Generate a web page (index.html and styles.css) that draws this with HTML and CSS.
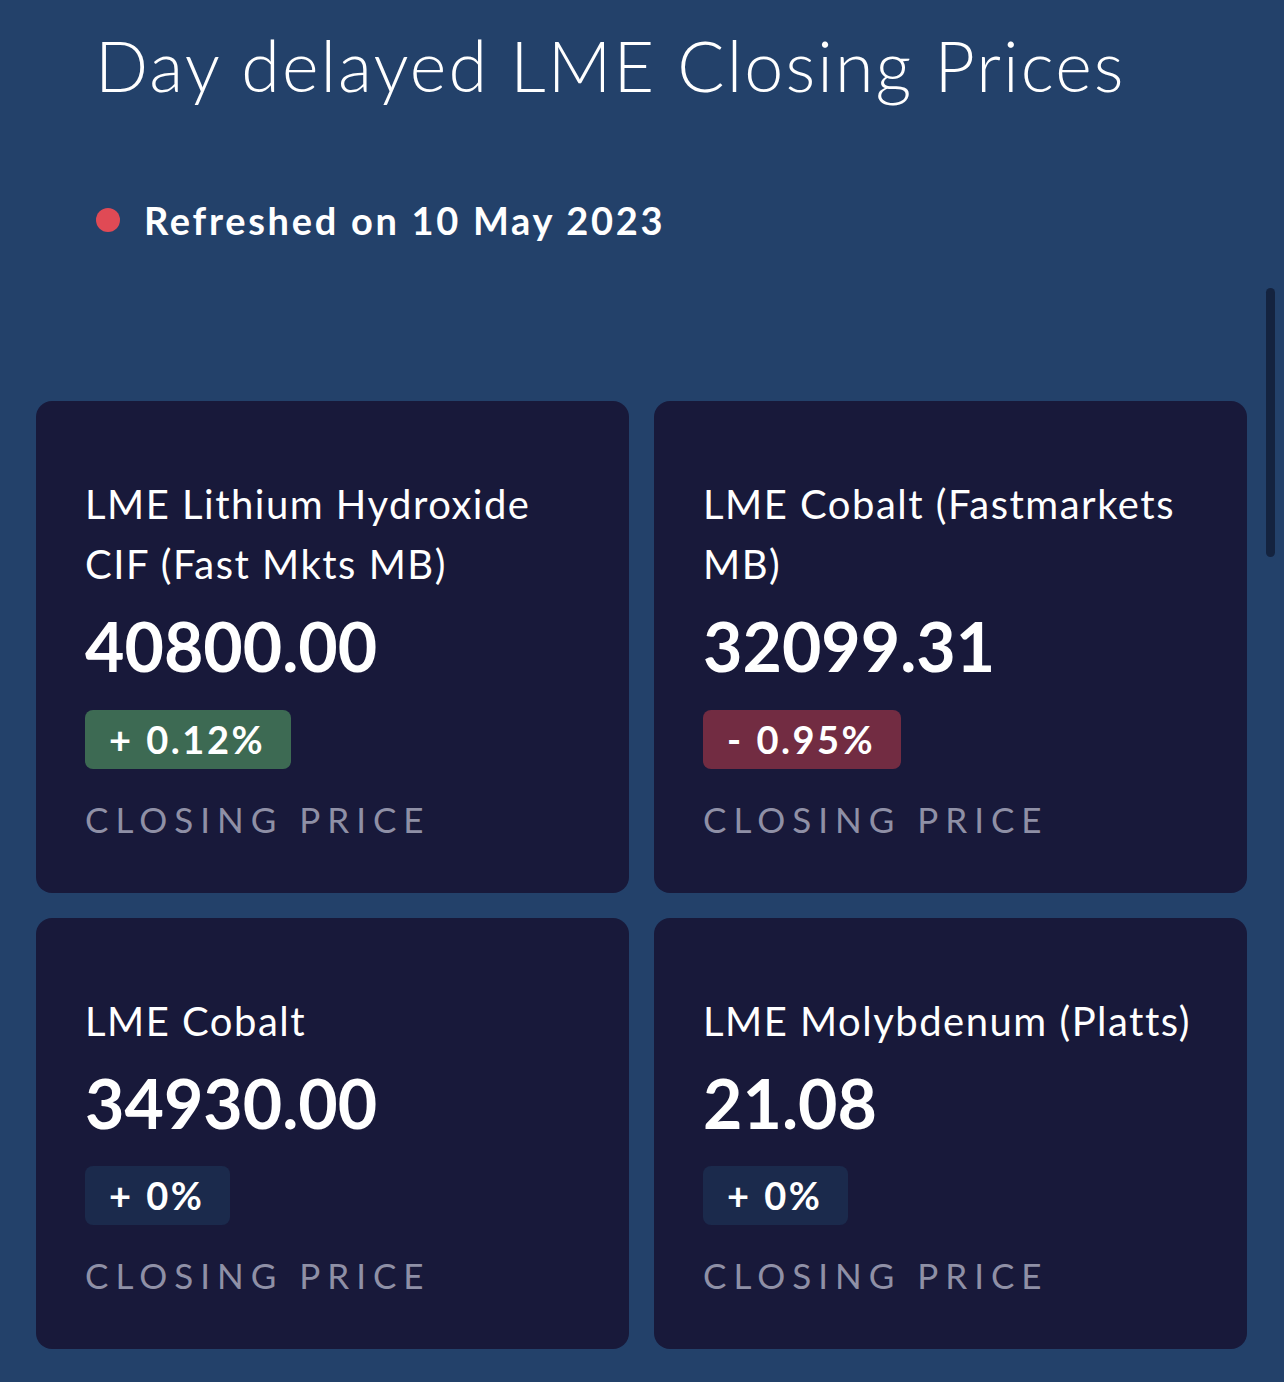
FILE: index.html
```html
<!DOCTYPE html>
<html lang="en">
<head>
    <meta charset="UTF-8">
    <meta name="viewport" content="width=device-width, initial-scale=1.0">
    <title>Day delayed LME Closing Prices</title>
    <link rel="stylesheet" href="styles.css">
</head>
<body>
    <div class="page">
        <header class="page-header">
            <h1>Day delayed LME Closing Prices</h1>
            <p class="status"><span class="status-dot"></span>Refreshed on 10 May 2023</p>
        </header>

        <div class="price-grid">
            <div class="price-card">
                <h2 class="metal-name">LME Lithium Hydroxide CIF (Fast Mkts MB)</h2>
                <p class="price">40800.00</p>
                <span class="change change-up">+ 0.12%</span>
                <p class="label">Closing Price</p>
            </div>
            <div class="price-card">
                <h2 class="metal-name">LME Cobalt (Fastmarkets MB)</h2>
                <p class="price">32099.31</p>
                <span class="change change-down">- 0.95%</span>
                <p class="label">Closing Price</p>
            </div>
            <div class="price-card">
                <h2 class="metal-name">LME Cobalt</h2>
                <p class="price">34930.00</p>
                <span class="change change-flat">+ 0%</span>
                <p class="label">Closing Price</p>
            </div>
            <div class="price-card">
                <h2 class="metal-name">LME Molybdenum (Platts)</h2>
                <p class="price">21.08</p>
                <span class="change change-flat">+ 0%</span>
                <p class="label">Closing Price</p>
            </div>
        </div>

        <!-- scroll indicator -->
        <div class="scroll-thumb"></div>
    </div>
</body>
</html>
```

FILE: styles.css
```css
/* Basic reset */
* {
    margin: 0;
    padding: 0;
    box-sizing: border-box;
}

body {
    font-family: Lato, "Noto Sans", sans-serif;
    background-color: #23416a;
    color: #fff;
}

.page {
    position: relative;
    min-height: 1382px;
}

/* Header */
.page-header {
    padding: 23px 0 0 96px;
}

.page-header h1 {
    font-size: 70px;
    font-weight: 300;
    line-height: 84px;
    letter-spacing: 2.1px;
    margin-left: -1px;
}

.status {
    display: flex;
    align-items: center;
    margin-top: 90px;
    font-size: 38px;
    font-weight: 700;
    line-height: 46px;
    letter-spacing: 2.7px;
}

.status-dot {
    width: 24px;
    height: 24px;
    border-radius: 50%;
    background-color: #e04a55;
    margin-right: 24px;
    flex-shrink: 0;
}

/* Cards */
.price-grid {
    display: grid;
    grid-template-columns: 1fr 1fr;
    gap: 25px;
    padding: 0 37px 34px 36px;
    margin-top: 158px;
}

.price-card {
    background-color: #18193a;
    border-radius: 16px;
    padding: 73px 49px 53px;
    display: flex;
    flex-direction: column;
    align-items: flex-start;
}

.metal-name {
    font-size: 40px;
    font-weight: 400;
    line-height: 60px;
    letter-spacing: 1.5px;
}

.price {
    margin-top: 11px;
    font-size: 68px;
    font-weight: 700;
    line-height: 1.2;
}

.change {
    margin-top: 23px;
    padding: 0 26px 0 24px;
    height: 59px;
    line-height: 59px;
    border-radius: 8px;
    font-size: 38px;
    font-weight: 700;
    letter-spacing: 2.5px;
    word-spacing: 1px;
}

.change-up {
    background-color: #3d6a53;
}

.change-down {
    background-color: #722c42;
}

.change-flat {
    background-color: #1b2a4c;
}

.label {
    margin-top: 29px;
    font-size: 35px;
    line-height: 42px;
    letter-spacing: 7px;
    text-transform: uppercase;
    color: #8f90a6;
}

.scroll-thumb {
    position: absolute;
    top: 288px;
    left: 1266px;
    width: 9px;
    height: 269px;
    border-radius: 5px;
    background-color: #14233f;
}
```
